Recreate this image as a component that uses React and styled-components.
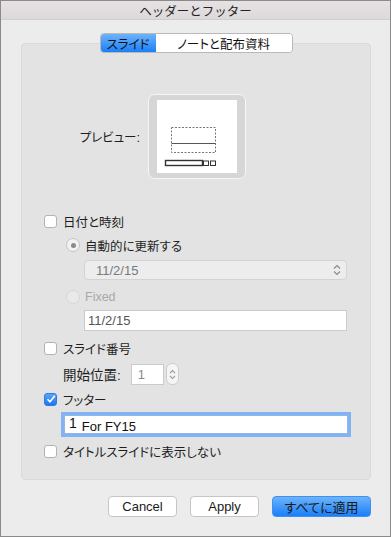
import React from "react";
import styled, { createGlobalStyle } from "styled-components";

const GlobalStyle = createGlobalStyle`
  body {
    margin: 0;
    background: #ececec;
    font-family: "Liberation Sans", "Noto Sans CJK JP", sans-serif;
    font-feature-settings: "palt";
  }
`;

const Window = styled.div`
  width: 391px;
  height: 537px;
  box-sizing: border-box;
  border: 1px solid #8a8a8a;
  background: #ececec;
  display: flex;
  flex-direction: column;
`;

const TitleBar = styled.div`
  height: 18px;
  flex-shrink: 0;
  background: linear-gradient(#e6e2e4, #ddd9db);
  border-bottom: 1px solid #cfcfcf;
  display: flex;
  align-items: center;
  justify-content: center;
  font-size: 12.5px;
  font-feature-settings: normal;
  color: #222;
`;

const Body = styled.div`
  padding: 13px 19px 0 20px;
  display: flex;
  flex-direction: column;
`;

const Tabs = styled.div`
  align-self: center;
  display: flex;
  height: 20px;
  margin-bottom: -10px;
  position: relative;
  z-index: 1;
  border: 1px solid #b9b9b9;
  border-radius: 4px;
  overflow: hidden;
  box-sizing: border-box;
`;

const Tab = styled.div`
  width: ${(p) => p.$w}px;
  display: flex;
  align-items: center;
  justify-content: center;
  font-size: 12.5px;
  color: #111;
  background: ${(p) => (p.$active ? "linear-gradient(#6db3fb, #1b7ff9)" : "#fff")};
`;

const Group = styled.div`
  height: 437px;
  box-sizing: border-box;
  background: #e3e3e3;
  border: 1px solid #dadada;
  border-radius: 4px;
  padding: 50px 20px 0 22px;
  display: flex;
  flex-direction: column;
`;

const PreviewRow = styled.div`
  display: flex;
  align-items: center;
  height: 85px;
  gap: 8px;
`;

const PreviewLabel = styled.span`
  width: 96px;
  text-align: right;
  font-size: 12.5px;
  color: #1e1e1e;
`;

const Label = styled.span`
  font-size: ${(p) => p.$size || 12.5}px;
  color: ${(p) => (p.$dim ? "#a9a9a9" : "#1e1e1e")};
  white-space: nowrap;
`;

const PreviewFrame = styled.div`
  width: 98px;
  height: 85px;
  box-sizing: border-box;
  border: 1px solid #f6f6f6;
  border-radius: 7px;
  background: #d6d6d6;
  display: flex;
  align-items: center;
  justify-content: center;
`;

const PreviewPage = styled.div`
  width: 80px;
  height: 73px;
  background: #fff;
  display: flex;
`;

const Row = styled.div`
  display: flex;
  align-items: center;
  height: ${(p) => p.$h || 14}px;
  margin-top: ${(p) => p.$mt || 0}px;
  padding-left: ${(p) => p.$indent || 0}px;
  gap: ${(p) => (p.$gap != null ? p.$gap : 6)}px;
`;

const Check = styled.span`
  width: 13px;
  height: 13px;
  box-sizing: border-box;
  border-radius: 3px;
  border: 1px solid ${(p) => (p.$on ? "#2a7be8" : "#b3b3b3")};
  background: ${(p) => (p.$on ? "linear-gradient(#58a6f8, #1f76ee)" : "#fff")};
  display: flex;
  align-items: center;
  justify-content: center;
  flex-shrink: 0;
`;

const Radio = styled.span`
  width: 14px;
  height: 14px;
  box-sizing: border-box;
  border-radius: 50%;
  border: 1px solid ${(p) => (p.$dim ? "#d6d6d6" : "#c4c4c4")};
  background: ${(p) => (p.$dim ? "#e9e9e9" : "#f2f2f2")};
  display: flex;
  align-items: center;
  justify-content: center;
  flex-shrink: 0;
  &::after {
    content: "";
    display: ${(p) => (p.$on ? "block" : "none")};
    width: 5px;
    height: 5px;
    border-radius: 50%;
    background: #8a8a8a;
  }
`;

const Select = styled.div`
  width: 263px;
  height: 20px;
  box-sizing: border-box;
  background: #ededed;
  border: 1px solid #d3d3d3;
  border-radius: 4px;
  display: flex;
  align-items: center;
  justify-content: space-between;
  padding: 0 5px 0 11px;
  font-size: 13px;
  color: #7a7a7a;
`;

const TextField = styled.div`
  width: ${(p) => p.$w}px;
  height: ${(p) => p.$h}px;
  box-sizing: border-box;
  background: #fff;
  border: 1px solid ${(p) => (p.$focus ? "#8fb6ee" : "#cbcbcb")};
  box-shadow: ${(p) => (p.$focus ? "0 0 0 3px #82b3f3" : "none")};
  display: flex;
  align-items: center;
  padding-left: ${(p) => p.$pl || 3}px;
  margin-left: ${(p) => p.$ml || 0}px;
  font-size: 13px;
  color: ${(p) => p.$color || "#555"};
`;

const Stepper = styled.div`
  width: 13px;
  height: 22px;
  box-sizing: border-box;
  border: 1px solid #cdcdcd;
  border-radius: 6px;
  background: #f5f5f5;
  display: flex;
  align-items: center;
  justify-content: center;
`;

const BigOne = styled.span`
  font-size: 14px;
  color: #111;
  margin-top: -3px;
  margin-right: 5px;
`;

const FooterText = styled.span`
  font-size: 13px;
  color: #111;
  margin-top: 3px;
`;

const Buttons = styled.div`
  display: flex;
  justify-content: flex-end;
  gap: 13px;
  margin-top: 16px;
`;

const Button = styled.div`
  width: ${(p) => p.$w}px;
  height: 21px;
  box-sizing: border-box;
  border-radius: 4px;
  border: 1px solid ${(p) => (p.$primary ? "#3f8ff5" : "#c5c5c5")};
  background: ${(p) => (p.$primary ? "linear-gradient(#6cb4fb, #197ffa)" : "#fff")};
  display: flex;
  align-items: center;
  justify-content: center;
  font-size: 13px;
  color: #1a1a1a;
`;

const Chevrons = ({ w = 8, h = 12, color = "#8c8c8c" }) => (
  <svg width={w} height={h} viewBox="0 0 8 12">
    <path d="M1 4.5 L4 1.5 L7 4.5 M1 7.5 L4 10.5 L7 7.5" fill="none" stroke={color} strokeWidth="1.2" />
  </svg>
);

const Tick = () => (
  <svg width="10" height="10" viewBox="0 0 10 10">
    <path d="M1.5 5.2 L4 7.8 L8.8 1.8" fill="none" stroke="#fff" strokeWidth="1.6" />
  </svg>
);

const PreviewDrawing = () => (
  <svg width="80" height="73" viewBox="0 0 80 73">
    <rect x="14.5" y="27.5" width="44" height="25" fill="none" stroke="#777" strokeDasharray="2 1.5" />
    <line x1="14.5" y1="43.5" x2="58.5" y2="43.5" stroke="#555" />
    <rect x="8.5" y="60.5" width="37" height="5" fill="#fff" stroke="#333" strokeWidth="1.4" />
    <rect x="46.5" y="61" width="5" height="4.5" fill="#fff" stroke="#333" />
    <rect x="53.5" y="61" width="5" height="4.5" fill="#fff" stroke="#333" />
  </svg>
);

export default function App() {
  return (
    <>
      <GlobalStyle />
      <Window>
        <TitleBar>ヘッダーとフッター</TitleBar>
        <Body>
          <Tabs>
            <Tab $w={55} $active>スライド</Tab>
            <Tab $w={136}>ノートと配布資料</Tab>
          </Tabs>
          <Group>
            <PreviewRow>
              <PreviewLabel>プレビュー:</PreviewLabel>
              <PreviewFrame>
                <PreviewPage>
                  <PreviewDrawing />
                </PreviewPage>
              </PreviewFrame>
            </PreviewRow>

            <Row $mt={35} $h={14}>
              <Check />
              <Label>日付と時刻</Label>
            </Row>
            <Row $mt={10} $h={14} $indent={22} $gap={5}>
              <Radio $on />
              <Label>自動的に更新する</Label>
            </Row>
            <Row $mt={8} $h={20} $indent={40}>
              <Select>
                11/2/15
                <Chevrons />
              </Select>
            </Row>
            <Row $mt={10} $h={14} $indent={22} $gap={5}>
              <Radio $dim />
              <Label $dim>Fixed</Label>
            </Row>
            <Row $mt={6} $h={21} $indent={40}>
              <TextField $w={263} $h={21}>11/2/15</TextField>
            </Row>

            <Row $mt={10} $h={14}>
              <Check />
              <Label>スライド番号</Label>
            </Row>
            <Row $mt={8} $h={22} $indent={19} $gap={2}>
              <Label $size={13.5}>開始位置:</Label>
              <TextField $w={33} $h={21} $pl={6} $ml={8} $color="#8a8a8a">1</TextField>
              <Stepper>
                <Chevrons w={7} h={13} color="#999" />
              </Stepper>
            </Row>
            <Row $mt={7} $h={14}>
              <Check $on>
                <Tick />
              </Check>
              <Label>フッター</Label>
            </Row>
            <Row $mt={9} $h={19} $indent={20}>
              <TextField $w={284} $h={19} $focus $pl={4}>
                <BigOne>1</BigOne>
                <FooterText>For FY15</FooterText>
              </TextField>
            </Row>
            <Row $mt={10} $h={14}>
              <Check />
              <Label>タイトルスライドに表示しない</Label>
            </Row>
          </Group>
          <Buttons>
            <Button $w={69}>Cancel</Button>
            <Button $w={69}>Apply</Button>
            <Button $w={99} $primary>すべてに適用</Button>
          </Buttons>
        </Body>
      </Window>
    </>
  );
}
